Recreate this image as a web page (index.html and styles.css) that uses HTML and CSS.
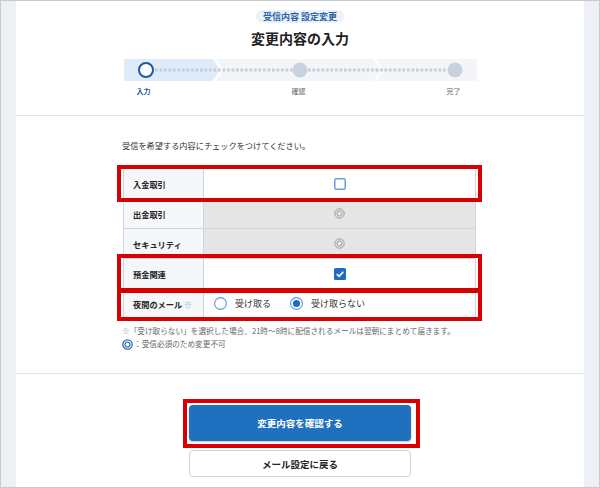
FILE: index.html
```html
<!DOCTYPE html>
<html lang="ja">
<head>
<meta charset="utf-8">
<title>変更内容の入力</title>
<link rel="stylesheet" href="styles.css">
</head>
<body>
<div class="frame">
  <main class="main">
    <header class="head">
      <div class="badge">受信内容 設定変更</div>
      <h1 class="title">変更内容の入力</h1>
      <div class="stepper">
        <svg class="step-band" width="353" height="22" viewBox="0 0 353 22">
          <rect width="353" height="22" fill="#f3f5f8"/>
          <polygon points="0,0 88,0 96,11 88,22 0,22" fill="#deebf9"/>
          <polyline points="90,-1 98,11 90,23" fill="none" stroke="#fff" stroke-width="2"/>
          <polyline points="250,-1 258,11 250,23" fill="none" stroke="#fff" stroke-width="2"/>
          <line x1="31" y1="11" x2="323" y2="11" stroke="#c3cddb" stroke-width="3" stroke-dasharray="2.7 1.8"/>
          <circle cx="22" cy="11" r="7" fill="#fff" stroke="#1a5aa6" stroke-width="2"/>
          <circle cx="176" cy="11" r="7.5" fill="#c8d2df"/>
          <circle cx="331" cy="11" r="7.5" fill="#c8d2df"/>
        </svg>
        <div class="step-labels"><span class="on">入力</span><span>確認</span><span>完了</span></div>
      </div>
    </header>

    <section class="body">
      <p class="lead">受信を希望する内容にチェックをつけてください。</p>
      <div class="tbl-wrap">
        <table class="opts">
          <colgroup><col class="c1"><col class="c2"></colgroup>
          <tr>
            <th>入金取引</th>
            <td><svg class="ico" width="12" height="12" viewBox="0 0 12 12"><rect x="0.75" y="0.75" width="10.5" height="10.5" rx="1.5" fill="#fff" stroke="#6a9fdc" stroke-width="1.5"/></svg></td>
          </tr>
          <tr class="fixed">
            <th>出金取引</th>
            <td><svg class="ico" width="11" height="11" viewBox="0 0 11 11"><circle cx="5.5" cy="5.5" r="4.7" fill="none" stroke="#9a9a9a" stroke-width="1"/><circle cx="5.5" cy="5.5" r="2.6" fill="none" stroke="#9a9a9a" stroke-width="1"/></svg></td>
          </tr>
          <tr class="fixed">
            <th>セキュリティ</th>
            <td><svg class="ico" width="11" height="11" viewBox="0 0 11 11"><circle cx="5.5" cy="5.5" r="4.7" fill="none" stroke="#9a9a9a" stroke-width="1"/><circle cx="5.5" cy="5.5" r="2.6" fill="none" stroke="#9a9a9a" stroke-width="1"/></svg></td>
          </tr>
          <tr>
            <th>預金関連</th>
            <td><svg class="ico" width="12" height="12" viewBox="0 0 12 12"><rect x="0" y="0" width="12" height="12" rx="1.5" fill="#1d6cc0"/><polyline points="2.8,6.2 5.1,8.4 9.3,3.8" fill="none" stroke="#fff" stroke-width="1.7"/></svg></td>
          </tr>
          <tr>
            <th>夜間のメール <span class="kome">※</span></th>
            <td class="radios">
              <div class="radio-row">
                <svg width="13" height="13" viewBox="0 0 13 13"><circle cx="6.5" cy="6.5" r="5.9" fill="#fff" stroke="#5b97d8" stroke-width="1.1"/></svg>
                <span class="rlabel">受け取る</span>
                <svg class="r2" width="13" height="13" viewBox="0 0 13 13"><circle cx="6.5" cy="6.5" r="5.9" fill="#fff" stroke="#5b97d8" stroke-width="1.1"/><circle cx="6.5" cy="6.5" r="3.6" fill="#1d6cc0"/></svg>
                <span class="rlabel">受け取らない</span>
              </div>
            </td>
          </tr>
        </table>
        <div class="annot a1"></div>
        <div class="annot a2"></div>
        <div class="annot a3"></div>
      </div>
      <div class="notes">
        <p class="n1"><span class="kome">※</span>「受け取らない」を選択した場合、21時〜8時に配信されるメールは翌朝にまとめて届きます。</p>
        <p class="n2"><svg class="req" width="11" height="11" viewBox="0 0 11 11"><circle cx="5.5" cy="5.5" r="4.7" fill="none" stroke="#2a6cc0" stroke-width="1.3"/><circle cx="5.5" cy="5.5" r="2.5" fill="none" stroke="#2a6cc0" stroke-width="1.2"/></svg>：受信必須のため変更不可</p>
      </div>
    </section>

    <footer class="foot">
      <div class="btn-wrap">
        <button class="btn btn-primary" type="button">変更内容を確認する</button>
        <div class="annot annot-btn"></div>
      </div>
      <button class="btn btn-secondary" type="button">メール設定に戻る</button>
    </footer>
  </main>
</div>
</body>
</html>
```

FILE: styles.css
```css
html, body {
  margin: 0;
  padding: 0;
}
body {
  font-family: "Noto Sans CJK JP", "Noto Sans", sans-serif;
  color: #222;
}
.frame {
  width: 600px;
  height: 488px;
  box-sizing: border-box;
  border: 1px solid #c9c9c9;
  background: #edf0f5;
  padding: 0 15px;
}
.main {
  background: #fff;
  height: 100%;
  display: flex;
  flex-direction: column;
}

/* header */
.head {
  padding: 9px 0 19px;
  border-bottom: 1px solid #dfe2e6;
  display: flex;
  flex-direction: column;
  align-items: center;
}
.badge {
  font-size: 9px;
  line-height: 13px;
  height: 13px;
  padding: 0 7px;
  border-radius: 7px;
  background: #edf2f8;
  color: #2a63a8;
  font-weight: 700;
}
.title {
  margin: 5px 0 0;
  font-size: 14px;
  line-height: 20px;
  font-weight: 700;
  color: #222;
}
.stepper {
  margin-top: 11px;
  width: 353px;
}
.step-band {
  display: block;
}
.step-labels {
  display: flex;
  justify-content: space-between;
  padding: 0 16px 0 13px;
  margin-top: 5px;
  font-size: 7px;
  line-height: 10px;
  color: #666;
}
.step-labels .on {
  color: #1a5aa6;
  font-weight: 700;
}

/* body */
.body {
  padding: 23px 0 22px 106px;
  border-bottom: 1px solid #dfe2e6;
}
.lead {
  margin: 0;
  font-size: 8.2px;
  line-height: 12px;
  color: #333;
}
.tbl-wrap {
  position: relative;
  width: 353px;
  margin: 17px 0 0 1px;
}
.opts {
  border-collapse: collapse;
  width: 353px;
  table-layout: fixed;
}
.c1 { width: 80px; }
.opts th,
.opts td {
  border: 1px solid #cdd5e0;
  height: 29px;
  padding: 0;
}
.opts th {
  background: #f5f7fa;
  text-align: left;
  padding-left: 9px;
  font-size: 8.2px;
  font-weight: 700;
  color: #222;
  white-space: nowrap;
}
.opts td {
  background: #fff;
  text-align: center;
}
.opts tr.fixed td {
  background: #e6e6e6;
}
.ico {
  display: block;
  margin: 0 auto;
}
.kome {
  color: #aaa;
  font-weight: 400;
}
.opts td.radios {
  text-align: left;
  padding-left: 10px;
}
.radio-row {
  display: flex;
  align-items: center;
}
.radio-row svg {
  display: block;
}
.rlabel {
  margin-left: 8px;
  font-size: 9px;
  line-height: 13px;
  color: #333;
}
.radio-row .r2 {
  margin-left: 19px;
}
.annot {
  position: absolute;
  box-sizing: border-box;
  border: 4px solid #d60000;
  pointer-events: none;
}
.a1 { left: -6px; top: -3px; width: 365px; height: 37px; }
.a2 { left: -6px; top: 86px; width: 365px; height: 38px; }
.a3 { left: -6px; top: 121px; width: 365px; height: 32px; }

.notes {
  margin-top: 5px;
  font-size: 7.65px;
  color: #666;
}
.notes p {
  margin: 0;
  display: flex;
  align-items: center;
}
.notes .n1 { line-height: 13px; height: 13px; }
.notes .n2 { line-height: 14px; height: 14px; }
.req {
  display: block;
  margin-right: 1px;
}

/* footer */
.foot {
  flex: 1;
  display: flex;
  flex-direction: column;
  align-items: center;
  padding-top: 31px;
}
.btn-wrap {
  position: relative;
}
.btn {
  width: 222px;
  box-sizing: border-box;
  border-radius: 4px;
  font-family: inherit;
  font-size: 9.5px;
  font-weight: 700;
  display: flex;
  align-items: center;
  justify-content: center;
  padding: 0;
  cursor: pointer;
}
.btn-primary {
  height: 36px;
  border: 0;
  background: #2070c0;
  color: #fff;
  box-shadow: 0 1px 2px rgba(0, 0, 0, 0.25);
}
.btn-secondary {
  height: 27px;
  margin-top: 9px;
  border: 1px solid #cdd4de;
  background: #fff;
  color: #222;
}
.annot-btn {
  left: -6px;
  top: -6px;
  right: -9px;
  bottom: -7px;
}
```
